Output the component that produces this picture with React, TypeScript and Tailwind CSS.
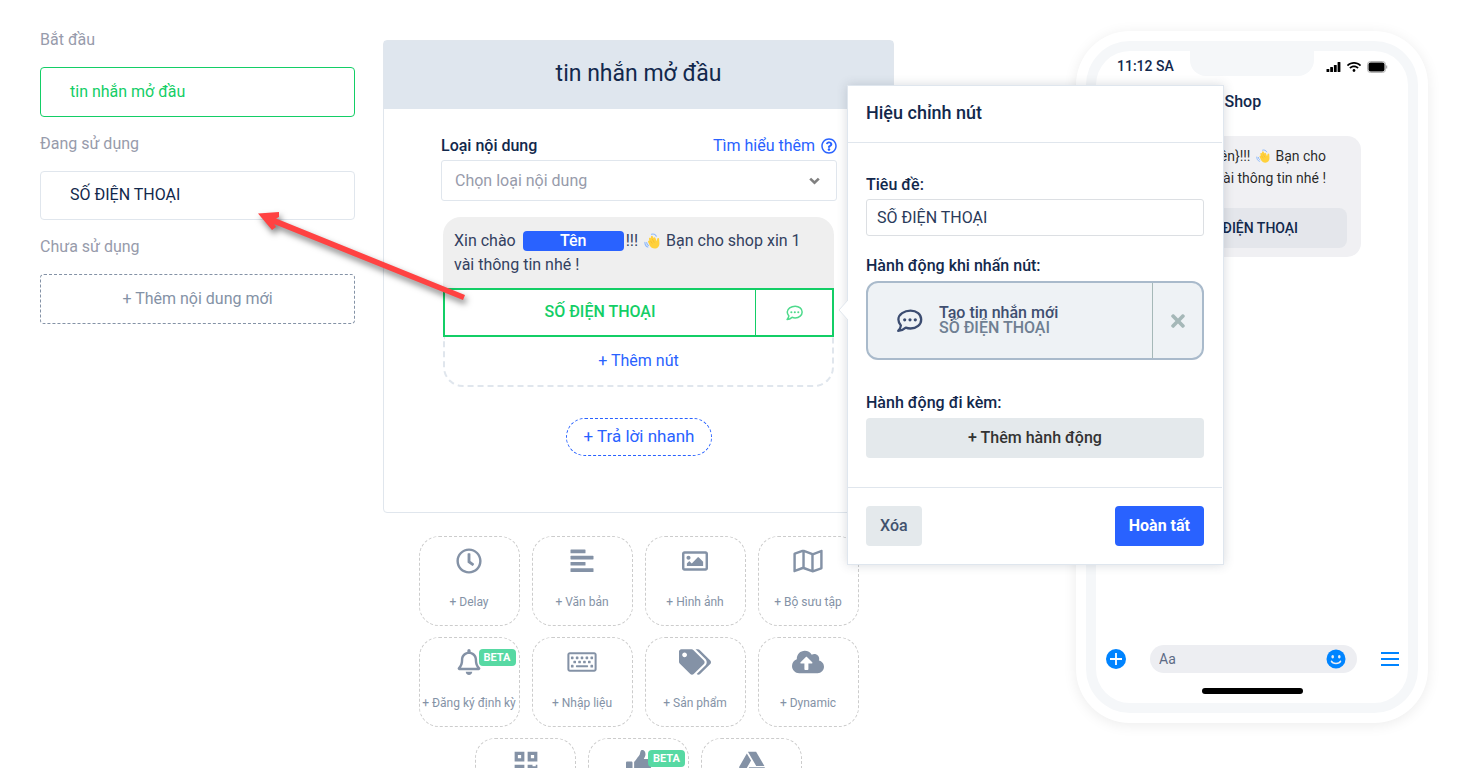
import React from "react";
import type { ComponentType, ReactNode } from "react";
import {
  FaCloudUploadAlt,
  FaGoogleDrive,
  FaQrcode,
  FaRegBell,
  FaRegClock,
  FaRegImage,
  FaRegKeyboard,
  FaRegMap,
  FaRegQuestionCircle,
  FaTags,
  FaThumbsUp,
  FaTimes,
  FaWifi,
} from "react-icons/fa";

function ChatDots({ className }: { className: string }) {
  return (
    <svg viewBox="0 0 26 24" className={className} fill="none" aria-hidden="true">
      <path
        d="M14 1.6c6.200 0 10.700 3.900 10.700 8.900s-4.500 9-10.700 9c-1.700 0-3.300-.3-4.700-.9-1.800 1.600-4.600 3.200-7.600 3.300 1.500-1.600 2.500-3.500 2.700-5.400C3 14.900 1.900 12.800 1.900 10.500 1.900 5.500 7.800 1.600 14 1.600z"
        stroke="currentColor"
        strokeWidth="2.300"
        strokeLinejoin="round"
      />
      <circle cx="8.200" cy="10.800" r="1.600" fill="currentColor" />
      <circle cx="13.500" cy="10.800" r="1.600" fill="currentColor" />
      <circle cx="18.800" cy="10.800" r="1.600" fill="currentColor" />
    </svg>
  );
}

function AlignBars({ className }: { className?: string }) {
  return (
    <svg viewBox="0 0 26 26" className={className} fill="currentColor" aria-hidden="true">
      <rect x="1.500" y="1.500" width="15" height="3.800" rx=".6" />
      <rect x="1.500" y="7.800" width="23" height="3.600" rx=".6" />
      <rect x="1.500" y="14" width="15" height="3.600" rx=".6" />
      <rect x="1.500" y="20.200" width="23" height="3.800" rx=".6" />
    </svg>
  );
}

function WavingHand({ className }: { className: string }) {
  return (
    <svg viewBox="0 0 16 16" className={className} role="img" aria-label="👋">
      <path
        d="M4.200 9.200c-.6-1 .5-1.900 1.200-1L5 5.800c-.2-1.200 1.100-1.500 1.600-.6L7 3.400c.2-1 1.500-1 1.800 0l.8 1.800c.1-1.100 1.500-1.200 1.800-.2l1.200 3.200.6-2.400c.3-1.200 1.900-1 1.900.3l.3 4.200c.2 3-1.800 5.300-4.800 5.300-2.200 0-3.800-1.200-4.900-3z"
        fill="#ffd13b"
      />
      <path d="M6.300 7.600l2 3M8.300 6l2 3.600" stroke="#f2b32a" strokeWidth=".6" fill="none" />
      <path
        d="M7.500 1.300c1.800-.7 4 .2 4.800 2M.9 9.200c0 2.300 1 4.200 3 4.900M2.700 9.600c.1 1.300.7 2.300 1.700 2.800"
        stroke="#8db8fb"
        strokeWidth="1.100"
        strokeLinecap="round"
        fill="none"
      />
    </svg>
  );
}

function SideSection({ title, children }: { title: string; children: ReactNode }) {
  return (
    <section>
      <h2 className="mb-[15px] text-base leading-6 text-[#979bab]">{title}</h2>
      {children}
    </section>
  );
}

function Sidebar() {
  return (
    <nav className="flex flex-col gap-[15px] pt-7">
      <SideSection title="Bắt đầu">
        <button className="block h-[50px] w-full rounded border border-[#13ce66] px-[29px] text-left text-[#13ce66]">
          tin nhắn mở đầu
        </button>
      </SideSection>
      <SideSection title="Đang sử dụng">
        <button className="block h-[49px] w-full rounded border border-[#e0e6ed] px-[29px] pb-[2px] text-left">
          SỐ ĐIỆN THOẠI
        </button>
      </SideSection>
      <SideSection title="Chưa sử dụng">
        <button className="block h-[50px] w-full rounded border border-dashed border-[#8492a6] text-center text-[#8492a6]">
          + Thêm nội dung mới
        </button>
      </SideSection>
    </nav>
  );
}

type Tile = {
  icon: ComponentType<{ className?: string }>;
  name: string;
  size: string;
  beta?: boolean;
  iconOnly?: boolean;
};

const tiles: Tile[] = [
  { icon: FaRegClock, name: "Delay", size: "size-[26px]" },
  { icon: AlignBars, name: "Văn bản", size: "size-[26px]" },
  { icon: FaRegImage, name: "Hình ảnh", size: "size-[26px]" },
  { icon: FaRegMap, name: "Bộ sưu tập", size: "h-[26px] w-[30px]" },
  { icon: FaRegBell, name: "Đăng ký định kỳ", size: "size-[26px]", beta: true },
  { icon: FaRegKeyboard, name: "Nhập liệu", size: "h-[26px] w-[30px]" },
  { icon: FaTags, name: "Sản phẩm", size: "h-[26px] w-[32px]" },
  { icon: FaCloudUploadAlt, name: "Dynamic", size: "h-[26px] w-[32px]" },
  { icon: FaQrcode, name: "QR", size: "size-[26px]", iconOnly: true },
  { icon: FaThumbsUp, name: "Like", size: "size-[26px]", beta: true, iconOnly: true },
  { icon: FaGoogleDrive, name: "Drive", size: "size-[26px]", iconOnly: true },
];

function TileGrid() {
  return (
    <div className="mx-auto mt-[23px] flex w-[450px] flex-wrap justify-center gap-x-3 gap-y-[11px]">
      {tiles.map(({ icon: Icon, name, size, beta, iconOnly }) => (
        <button
          key={name}
          aria-label={name}
          className="relative flex h-[90px] w-[101px] flex-col items-center rounded-[20px] border border-dashed border-[#cccccc] pt-[11px] text-[#8492a6]"
        >
          <Icon className={size} />
          {!iconOnly && (
            <span className="mt-[18px] text-xs leading-5 whitespace-nowrap">+ {name}</span>
          )}
          {beta && (
            <span className="absolute top-[11px] right-[3px] rounded bg-[#57d9a3] px-[5px] text-[11px] leading-[17px] font-bold text-white">
              BETA
            </span>
          )}
        </button>
      ))}
    </div>
  );
}

function Editor() {
  return (
    <section className="rounded border border-[#e0e6ed] pb-[56px]">
      <h1 className="bg-[#dfe6ee] pt-[17px] pb-[19px] text-center text-[23px] leading-8">
        tin nhắn mở đầu
      </h1>
      <div className="pt-[25px] pr-[56px] pl-[57px]">
        <div className="flex items-center justify-between leading-6">
          <label htmlFor="content-type" className="font-medium">
            Loại nội dung
          </label>
          <a href="#help" className="flex items-center gap-[6px] text-[#2962ff]">
            Tìm hiểu thêm
            <FaRegQuestionCircle className="size-4" />
          </a>
        </div>
        <div className="relative mt-[2px]">
          <select
            id="content-type"
            className="h-[41px] w-full appearance-none rounded-[3px] border border-[#e0e6ed] bg-white px-[13px] text-[#979bab]"
          >
            <option>Chọn loại nội dung</option>
          </select>
          <svg
            viewBox="0 0 11 8"
            className="pointer-events-none absolute top-[17px] right-[17px] h-2 w-[11px] text-[#808080]"
            fill="none"
            aria-hidden="true"
          >
            <path d="M1.200 1.600l4.300 4.200 4.300-4.200" stroke="currentColor" strokeWidth="2.600" />
          </svg>
        </div>

        <div className="mt-4 mr-[3px] ml-[2px]">
          <p className="rounded-t-[18px] bg-[#efefef] px-[11px] pt-3 pb-[11px] leading-6 text-[#33415f]">
            Xin chào{" "}
            <span className="ml-[3px] inline-block h-5 w-[101px] rounded bg-[#2962ff] text-center leading-5 font-medium text-white">
              Tên
            </span>
            <span className="ml-[2px]">!!!</span>{" "}
            <WavingHand className="mx-[2px] inline-block size-4 align-[-3px]" /> Bạn cho shop xin 1 vài
            thông tin nhé !
          </p>
          <div className="flex h-[49px] border-2 border-[#13ce66] text-[#13ce66]">
            <button className="flex-1 pb-[2px] font-medium">SỐ ĐIỆN THOẠI</button>
            <button
              aria-label="Tin nhắn"
              className="flex w-[77px] items-center justify-center border-l border-[#13ce66]"
            >
              <ChatDots className="h-4 w-[17px] opacity-75" />
            </button>
          </div>
          <button className="block h-[50px] w-full rounded-b-[20px] border-2 border-t-0 border-dashed border-[#e0e6ed] text-[#2962ff]">
            + Thêm nút
          </button>
        </div>
        <button className="mx-auto mt-[31px] block h-[38px] rounded-full border border-dashed border-[#2962ff] px-[17px] text-[17px] text-[#2962ff]">
          + Trả lời nhanh
        </button>
      </div>
    </section>
  );
}

function ButtonDialog() {
  return (
    <div
      role="dialog"
      aria-labelledby="dialog-title"
      className="absolute top-[45px] left-[464px] z-10 w-[377px] border border-[#dfe6ee] bg-white pr-px shadow-[0_0_10px_rgba(60,70,90,0.2)]"
    >
      <svg
        viewBox="0 0 10 24"
        className="absolute top-[212px] right-full h-6 w-[10px]"
        aria-hidden="true"
      >
        <path d="M10 2L1 12l9 10" fill="#fff" stroke="#e0e6ed" />
      </svg>
      <h2
        id="dialog-title"
        className="border-b border-[#e0e6ed] px-[18px] pt-[13px] pb-[15px] text-lg leading-7 font-medium"
      >
        Hiệu chỉnh nút
      </h2>
      <div className="px-[18px] pt-[30px] pb-[29px]">
        <label htmlFor="button-title" className="block leading-6 font-medium">
          Tiêu đề:
        </label>
        <input
          id="button-title"
          defaultValue="SỐ ĐIỆN THOẠI"
          className="mt-[2px] block h-[37px] w-full rounded-[3px] border border-[#dcdfe3] px-[10px] text-[#2a3a5a]"
        />
        <h3 className="mt-[18px] leading-6 font-medium">Hành động khi nhấn nút:</h3>
        <div className="mt-[3px] flex h-[79px] rounded-xl border-2 border-[#a9bacb] bg-[#eef2f5]">
          <div className="flex flex-1 items-center pl-7">
            <ChatDots className="h-6 w-[27px] text-[#3c4d71]" />
            <p className="ml-4 pb-[2px] leading-[15px] font-medium text-[#3f4f70]">
              Tạo tin nhắn mới
              <br />
              <span className="text-[#6f7f92]">SỐ ĐIỆN THOẠI</span>
            </p>
          </div>
          <button
            aria-label="Gỡ hành động"
            className="flex w-[50px] items-center justify-center border-l border-[#a5b8b8] text-[#a5b8b8]"
          >
            <FaTimes className="size-5" />
          </button>
        </div>
        <h3 className="mt-[31px] leading-6 font-medium">Hành động đi kèm:</h3>
        <button className="mt-[3px] block h-10 w-full rounded bg-[#e4e9ec] font-medium text-[#333333]">
          + Thêm hành động
        </button>
      </div>
      <div className="flex justify-between border-t border-[#e0e6ed] p-[18px]">
        <button className="h-10 rounded bg-[#e4e9ec] px-[14px] font-medium text-[#42526e]">Xóa</button>
        <button className="h-10 rounded bg-[#2962ff] px-[14px] font-bold text-white">Hoàn tất</button>
      </div>
    </div>
  );
}

function Phone() {
  return (
    <div className="w-[352px] justify-self-end rounded-[54px] bg-white p-[10px] shadow-[0_2px_14px_rgba(0,0,0,0.08)]">
      <div className="rounded-[44px] bg-[#f5f7f9] p-[10px]">
        <div className="flex h-[652px] flex-col rounded-[34px] bg-white">
          <div className="flex h-[26px] items-start pr-5 pl-[21px]">
            <span className="w-[73px] pt-[5px] text-sm leading-5 font-medium">11:12 SA</span>
            <span className="h-[25px] w-[124px] rounded-b-[16px] bg-[#f5f7f9]" />
            <span className="ml-auto flex w-[62px] items-center gap-[6px] pt-[10px] text-black">
              <svg viewBox="0 0 15 12" className="h-3 w-[15px]" fill="currentColor" aria-hidden="true">
                <rect x="0.500" y="8" width="2.800" height="3" rx=".5" />
                <rect x="4.200" y="6" width="2.800" height="5" rx=".5" />
                <rect x="7.900" y="4" width="2.800" height="7" rx=".5" />
                <rect x="11.600" y="1" width="2.800" height="10" rx=".5" />
              </svg>
              <FaWifi className="h-3 w-[14px]" />
              <svg viewBox="0 0 21 12" className="h-3 w-[21px]" aria-hidden="true">
                <rect x=".5" y=".5" width="18" height="11" rx="3" fill="none" stroke="#b5b5b5" />
                <rect x="1.500" y="1.500" width="16" height="9" rx="2" fill="#000" />
                <path d="M19.700 4.500v3" stroke="#999" />
              </svg>
            </span>
          </div>
          <h2 className="mt-[13px] pl-[100px] leading-6 font-medium">Bot Shop</h2>
          <div className="mt-[22px] ml-[10px] w-[255px] rounded-[14px] bg-[#f0f0f3] px-[14px] pt-[9px] pb-[9px]">
            <p className="w-[206px] text-right text-sm leading-[22px] text-black/85">
              Xin chào {"{Tên}"}!!! <WavingHand className="mx-[2px] inline-block size-[14px] align-[-2px]" /> Bạn cho
              <br />
              shop xin 1 vài thông tin nhé !
            </p>
            <button className="mt-[19px] block h-10 w-full rounded-lg bg-[#e4e6eb] pl-8 text-sm font-medium">
              SỐ ĐIỆN THOẠI
            </button>
          </div>
          <div className="mt-auto flex items-center pr-[9px] pl-[10px] text-[#0084ff]">
            <button
              aria-label="Thêm"
              className="flex size-5 shrink-0 items-center justify-center rounded-full bg-[#0084ff] text-white"
            >
              <svg viewBox="0 0 12 12" className="size-3" aria-hidden="true">
                <path d="M6 0v12M0 6h12" stroke="currentColor" strokeWidth="1.800" />
              </svg>
            </button>
            <div className="mx-6 flex h-7 min-w-0 flex-1 items-center rounded-full bg-[#edeef2] pr-[11px] pl-[9px]">
              <input
                aria-label="Tin nhắn"
                placeholder="Aa"
                className="min-w-0 flex-1 bg-transparent text-sm placeholder:text-[#5d6b85]"
              />
              <svg viewBox="0 0 20 20" className="size-5 shrink-0" aria-hidden="true">
                <circle cx="10" cy="10" r="9.500" fill="currentColor" />
                <ellipse cx="6.700" cy="7.800" rx="1.300" ry="1.800" fill="#edeef2" />
                <ellipse cx="13.300" cy="7.800" rx="1.300" ry="1.800" fill="#edeef2" />
                <path
                  d="M5.500 12.300c1.200 3 7.800 3 9 0"
                  stroke="#edeef2"
                  strokeWidth="1.600"
                  strokeLinecap="round"
                  fill="none"
                />
              </svg>
            </div>
            <button aria-label="Trình đơn" className="shrink-0">
              <svg viewBox="0 0 18 14" className="block h-[14px] w-[18px]" aria-hidden="true">
                <path d="M0 1h18M0 7h18M0 13h18" stroke="currentColor" strokeWidth="2.200" />
              </svg>
            </button>
          </div>
          <div className="mx-auto mt-[15px] mb-[9px] h-[6px] w-[101px] rounded-full bg-black" />
        </div>
      </div>
    </div>
  );
}

function Arrow() {
  return (
    <svg
      viewBox="0 0 240 120"
      className="pointer-events-none absolute top-[200px] left-[240px] z-20 h-[120px] w-[240px] drop-shadow-[2px_4px_3px_rgba(0,0,0,0.5)]"
      aria-hidden="true"
    >
      <path d="M18 13.500L39 12v5L36 18.500 225 95l-2 5L34 24l2 3-4 3z" fill="#ff4242" />
    </svg>
  );
}

export default function App() {
  return (
    <main className="relative h-screen overflow-hidden bg-white pr-[51px] pl-10 font-['Roboto',sans-serif] text-base text-[#12284c]">
      <div className="grid grid-cols-[315fr_511fr_506fr] items-start gap-x-7">
        <Sidebar />
        <div className="relative pt-10">
          <Editor />
          <TileGrid />
          <div className="absolute top-10 left-0">
            <ButtonDialog />
          </div>
        </div>
        <div className="grid pt-[31px]">
          <Phone />
        </div>
      </div>
      <Arrow />
    </main>
  );
}
